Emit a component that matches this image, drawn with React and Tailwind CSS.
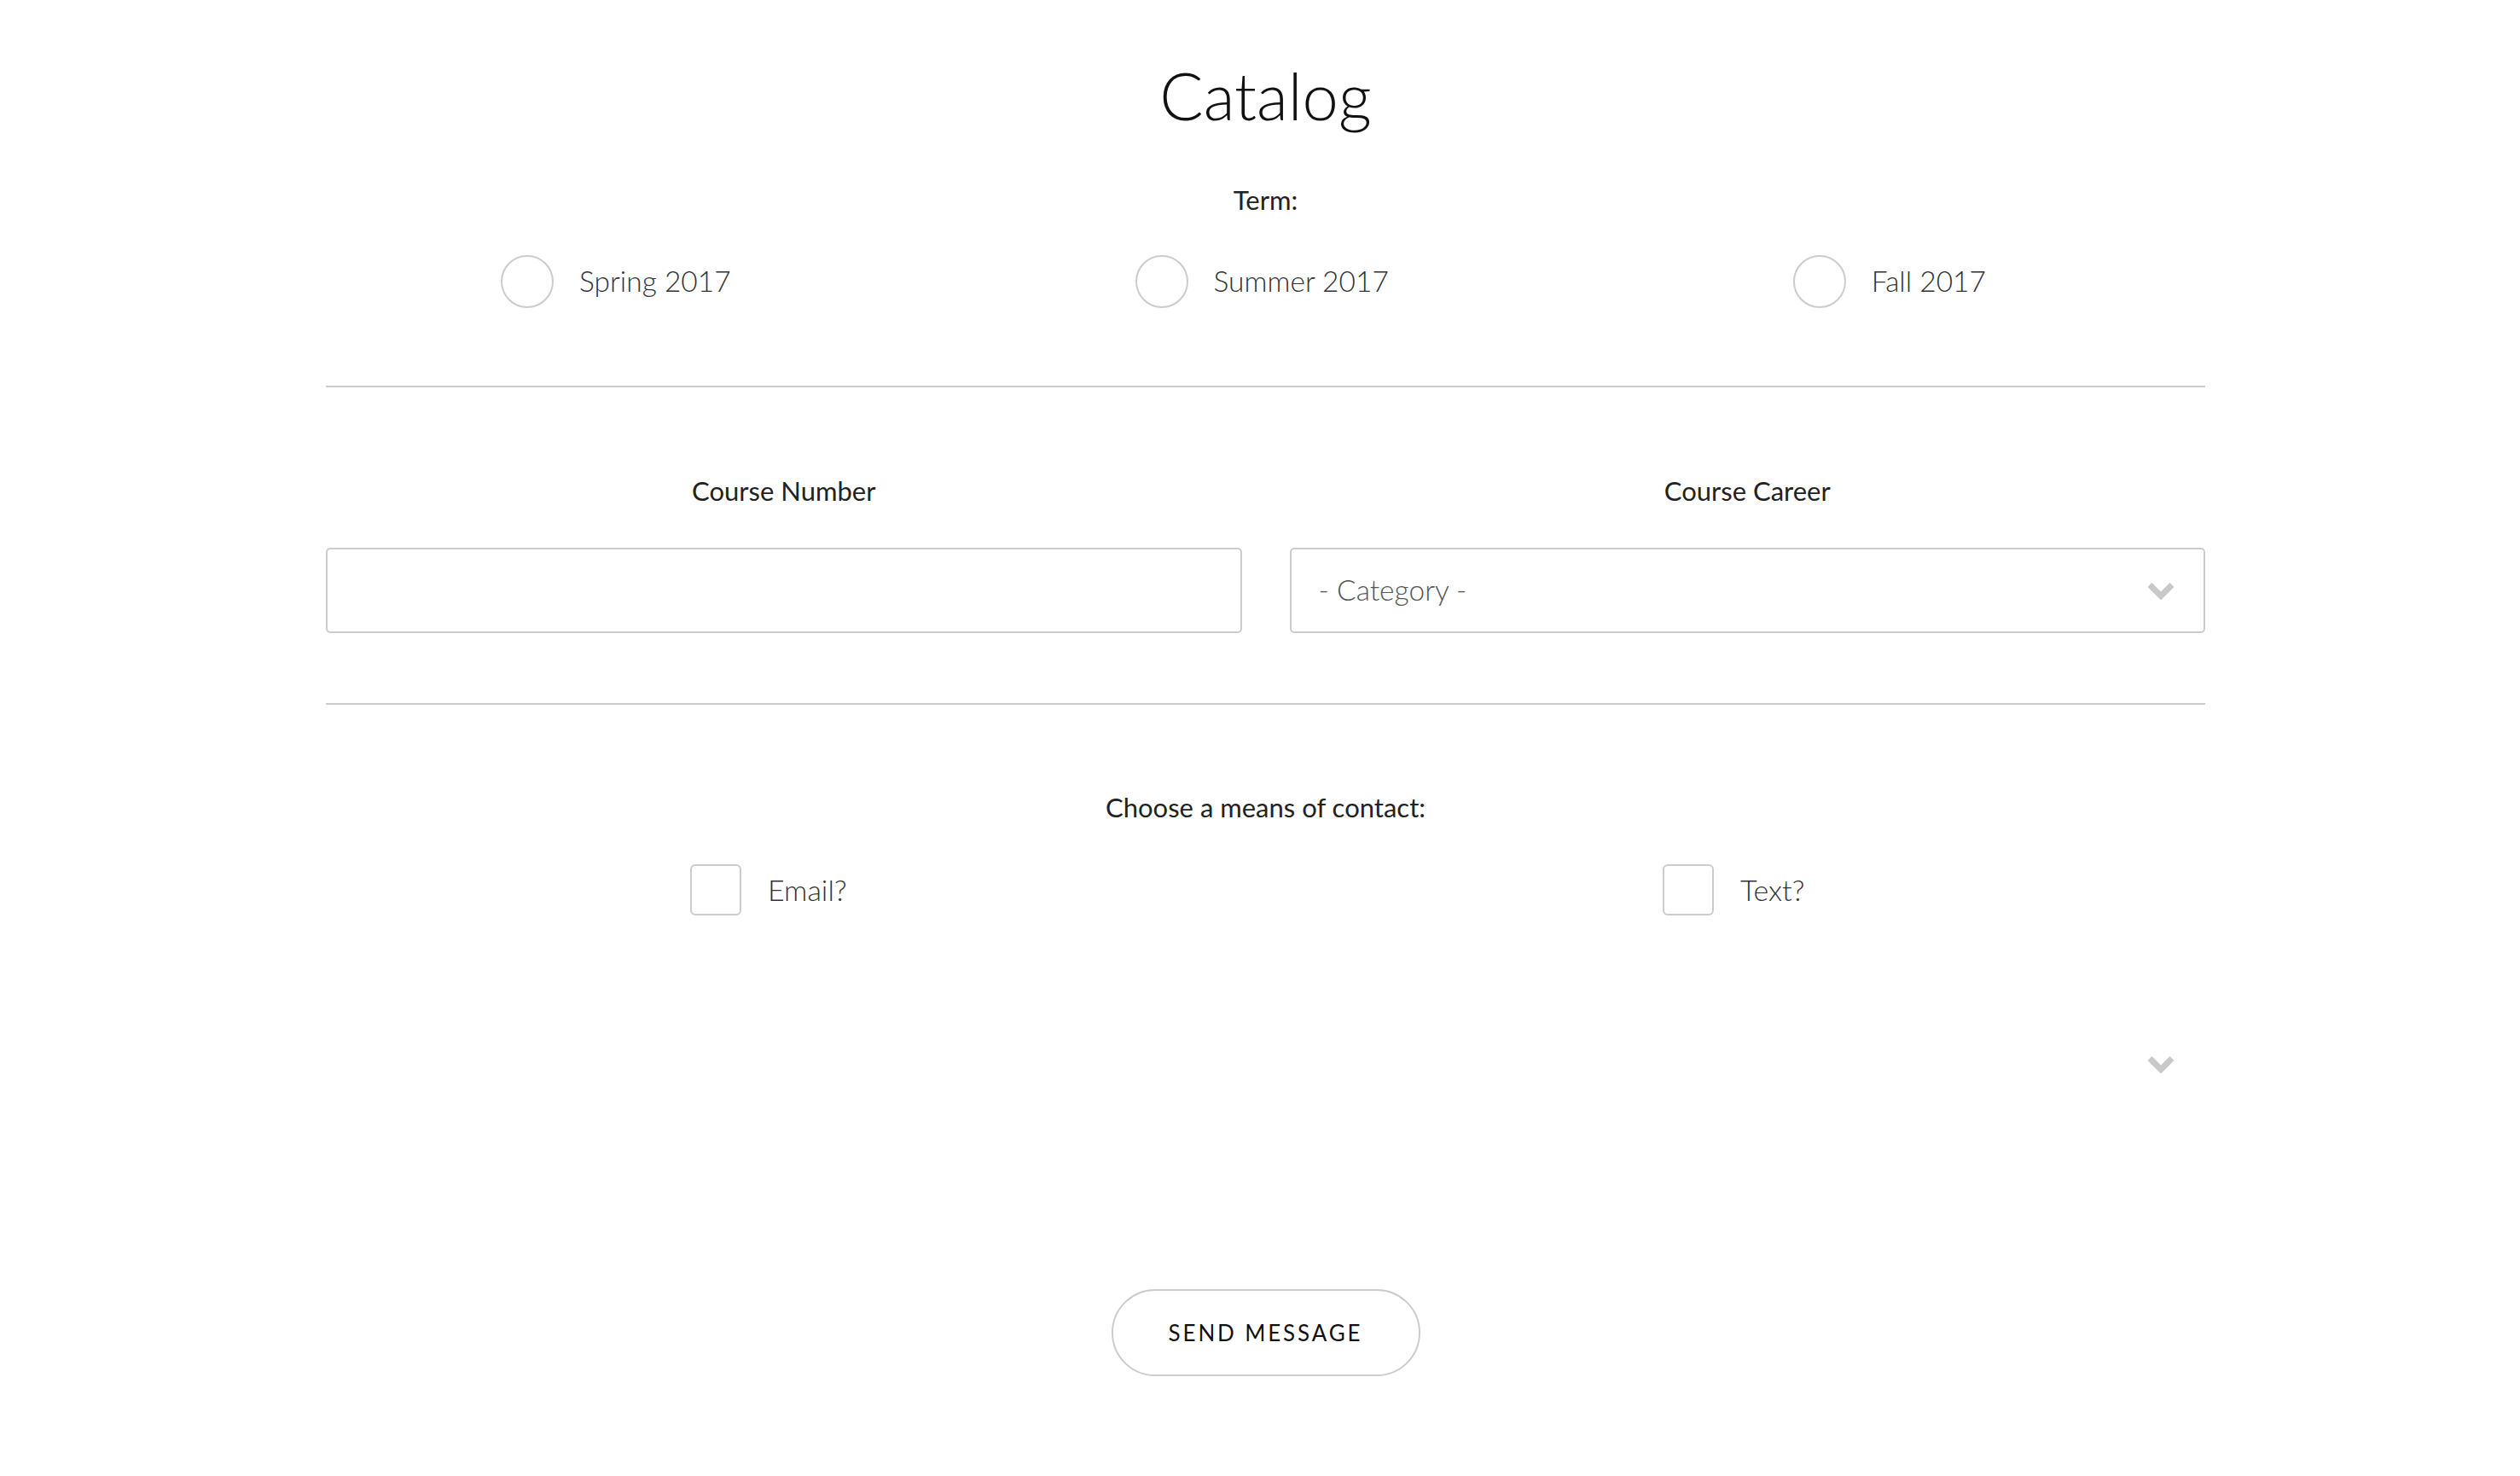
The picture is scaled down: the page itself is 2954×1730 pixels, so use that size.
import React from "react";

const Chevron = () => (
  <svg width="32" height="21" viewBox="0 0 32 21" className="block">
    <polyline points="3,3.5 16,16.5 29,3.5" fill="none" stroke="#c9c9c9" strokeWidth="7" />
  </svg>
);

const Radio = ({ label }) => (
  <label className="flex items-center gap-[30px]">
    <span className="w-[62px] h-[62px] rounded-full border-2 border-[#cccccc] bg-white box-border" />
    <span className="text-[33.5px] font-light text-[#333] leading-none">{label}</span>
  </label>
);

const Check = ({ label }) => (
  <label className="flex items-center gap-[31px]">
    <span className="w-[60px] h-[60px] rounded-[6px] border-2 border-[#cccccc] bg-white box-border" />
    <span className="text-[34px] font-light text-[#333] leading-none">{label}</span>
  </label>
);

export default function App() {
  return (
    <div className="min-h-[1730px] bg-white font-['Lato','Liberation_Sans',sans-serif]">
      <div className="ml-[382px] w-[2203px] flex flex-col">
        <div className="mt-[62px] h-[100px] flex items-center justify-center">
          <h1 className="text-[76px] font-light leading-none text-[#111]">Catalog</h1>
        </div>
        <div className="mt-[52px] h-[40px] flex items-center justify-center">
          <span className="text-[31px] text-[#222] leading-none">Term:</span>
        </div>
        <div className="mt-[45px] h-[62px] flex items-center justify-between pl-[205px] pr-[257px]">
          <Radio label="Spring 2017" />
          <Radio label="Summer 2017" />
          <Radio label="Fall 2017" />
        </div>
        <div className="mt-[91px] h-[2px] bg-[#cccccc]" />
        <div className="mt-[101px] grid grid-cols-2 gap-[56px]">
          <div className="flex flex-col">
            <div className="h-[40px] flex items-center justify-center">
              <span className="text-[31px] text-[#222] leading-none">Course Number</span>
            </div>
            <input
              type="text"
              className="mt-[47px] h-[100px] w-full rounded-[5px] border-2 border-[#cccccc] bg-white outline-none px-[34px] text-[34px] font-light"
            />
          </div>
          <div className="flex flex-col">
            <div className="h-[40px] flex items-center justify-center">
              <span className="text-[31px] text-[#222] leading-none">Course Career</span>
            </div>
            <div className="mt-[47px] h-[100px] w-full rounded-[5px] border-2 border-[#cccccc] bg-white flex items-center justify-between pl-[32px] pr-[34px]">
              <span className="text-[33.5px] font-light text-[#555] leading-none">- Category -</span>
              <Chevron />
            </div>
          </div>
        </div>
        <div className="mt-[82px] h-[2px] bg-[#cccccc]" />
        <div className="mt-[100px] h-[40px] flex items-center justify-center">
          <span className="text-[31px] text-[#222] leading-none">Choose a means of contact:</span>
        </div>
        <div className="mt-[47px] h-[60px] grid grid-cols-2 gap-[56px]">
          <div className="flex items-center justify-center pr-[36px]">
            <Check label="Email?" />
          </div>
          <div className="flex items-center justify-center pr-[32px]">
            <Check label="Text?" />
          </div>
        </div>
        <div className="mt-[154px] h-[40px] flex items-center justify-end pr-[36px]">
          <Chevron />
        </div>
        <div className="mt-[244px] flex justify-center">
          <button className="h-[102px] w-[362px] rounded-full border-2 border-[#cccccc] bg-white text-[26px] tracking-[0.11em] text-[#111] leading-none">
            SEND MESSAGE
          </button>
        </div>
      </div>
    </div>
  );
}
